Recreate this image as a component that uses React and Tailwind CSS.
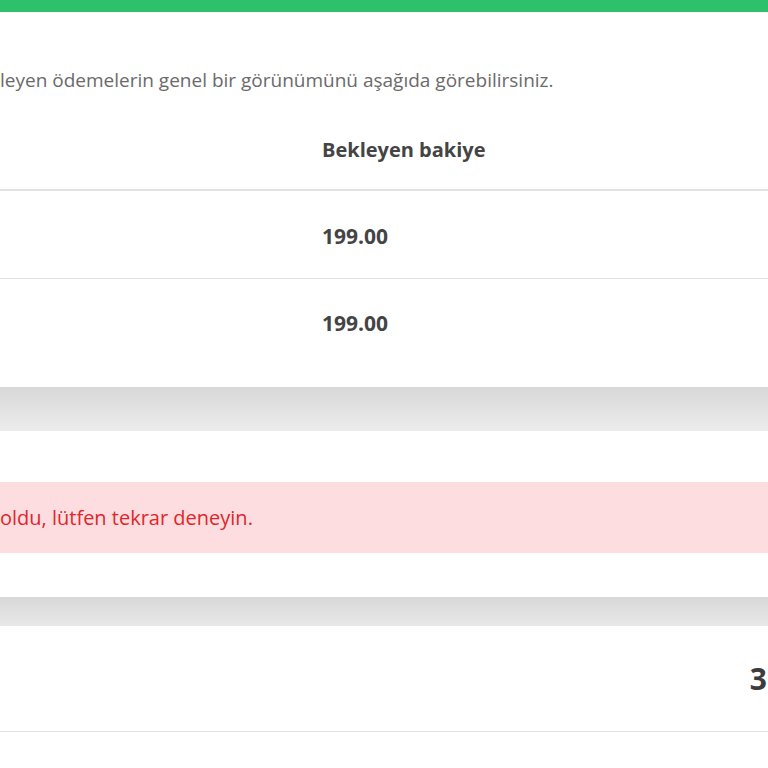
export default function App() {
  const rows = ['199.00', '199.00'];

  return (
    <div className="w-[768px] h-[768px] overflow-hidden bg-white font-['Open_Sans',sans-serif]">
      <div className="h-[12px] bg-[#2ec16b]" />

      <p className="pt-[55px] pb-[17px] text-[19px] leading-[26px] text-[#6a6a6a] whitespace-nowrap">
        leyen ödemelerin genel bir görünümünü aşağıda görebilirsiniz.
      </p>

      <div className="border-b-2 border-[#e2e2e2] grid grid-cols-[322px_1fr] h-[81px] items-center">
        <div />
        <div className="text-[20px] font-bold text-[#444]">Bekleyen bakiye</div>
      </div>
      {rows.map((v, i) => (
        <div
          key={i}
          className={
            i === 0
              ? 'border-b border-[#e2e2e2] grid grid-cols-[322px_1fr] h-[88px] pt-[31px]'
              : 'grid grid-cols-[322px_1fr] h-[108px] pt-[30px]'
          }
        >
          <div />
          <div className="text-[21px] leading-[28px] font-bold text-[#444]">{v}</div>
        </div>
      ))}

      <div className="h-[44px] bg-gradient-to-b from-[#d8d8d8] to-[#ececec]" />

      <div className="mt-[51px] h-[71px] bg-[#fddde0] flex items-center">
        <span className="text-[20px] text-[#e0262b] whitespace-nowrap">oldu, lütfen tekrar deneyin.</span>
      </div>

      <div className="mt-[44px] h-[29px] bg-gradient-to-b from-[#d8d8d8] to-[#e8e8e8]" />

      <div className="h-[106px] border-b border-[#e2e2e2] flex items-center justify-end">
        <span className="text-[30px] leading-[36px] font-bold text-[#3c3c3c] pr-[1px]">3</span>
      </div>
    </div>
  );
}
